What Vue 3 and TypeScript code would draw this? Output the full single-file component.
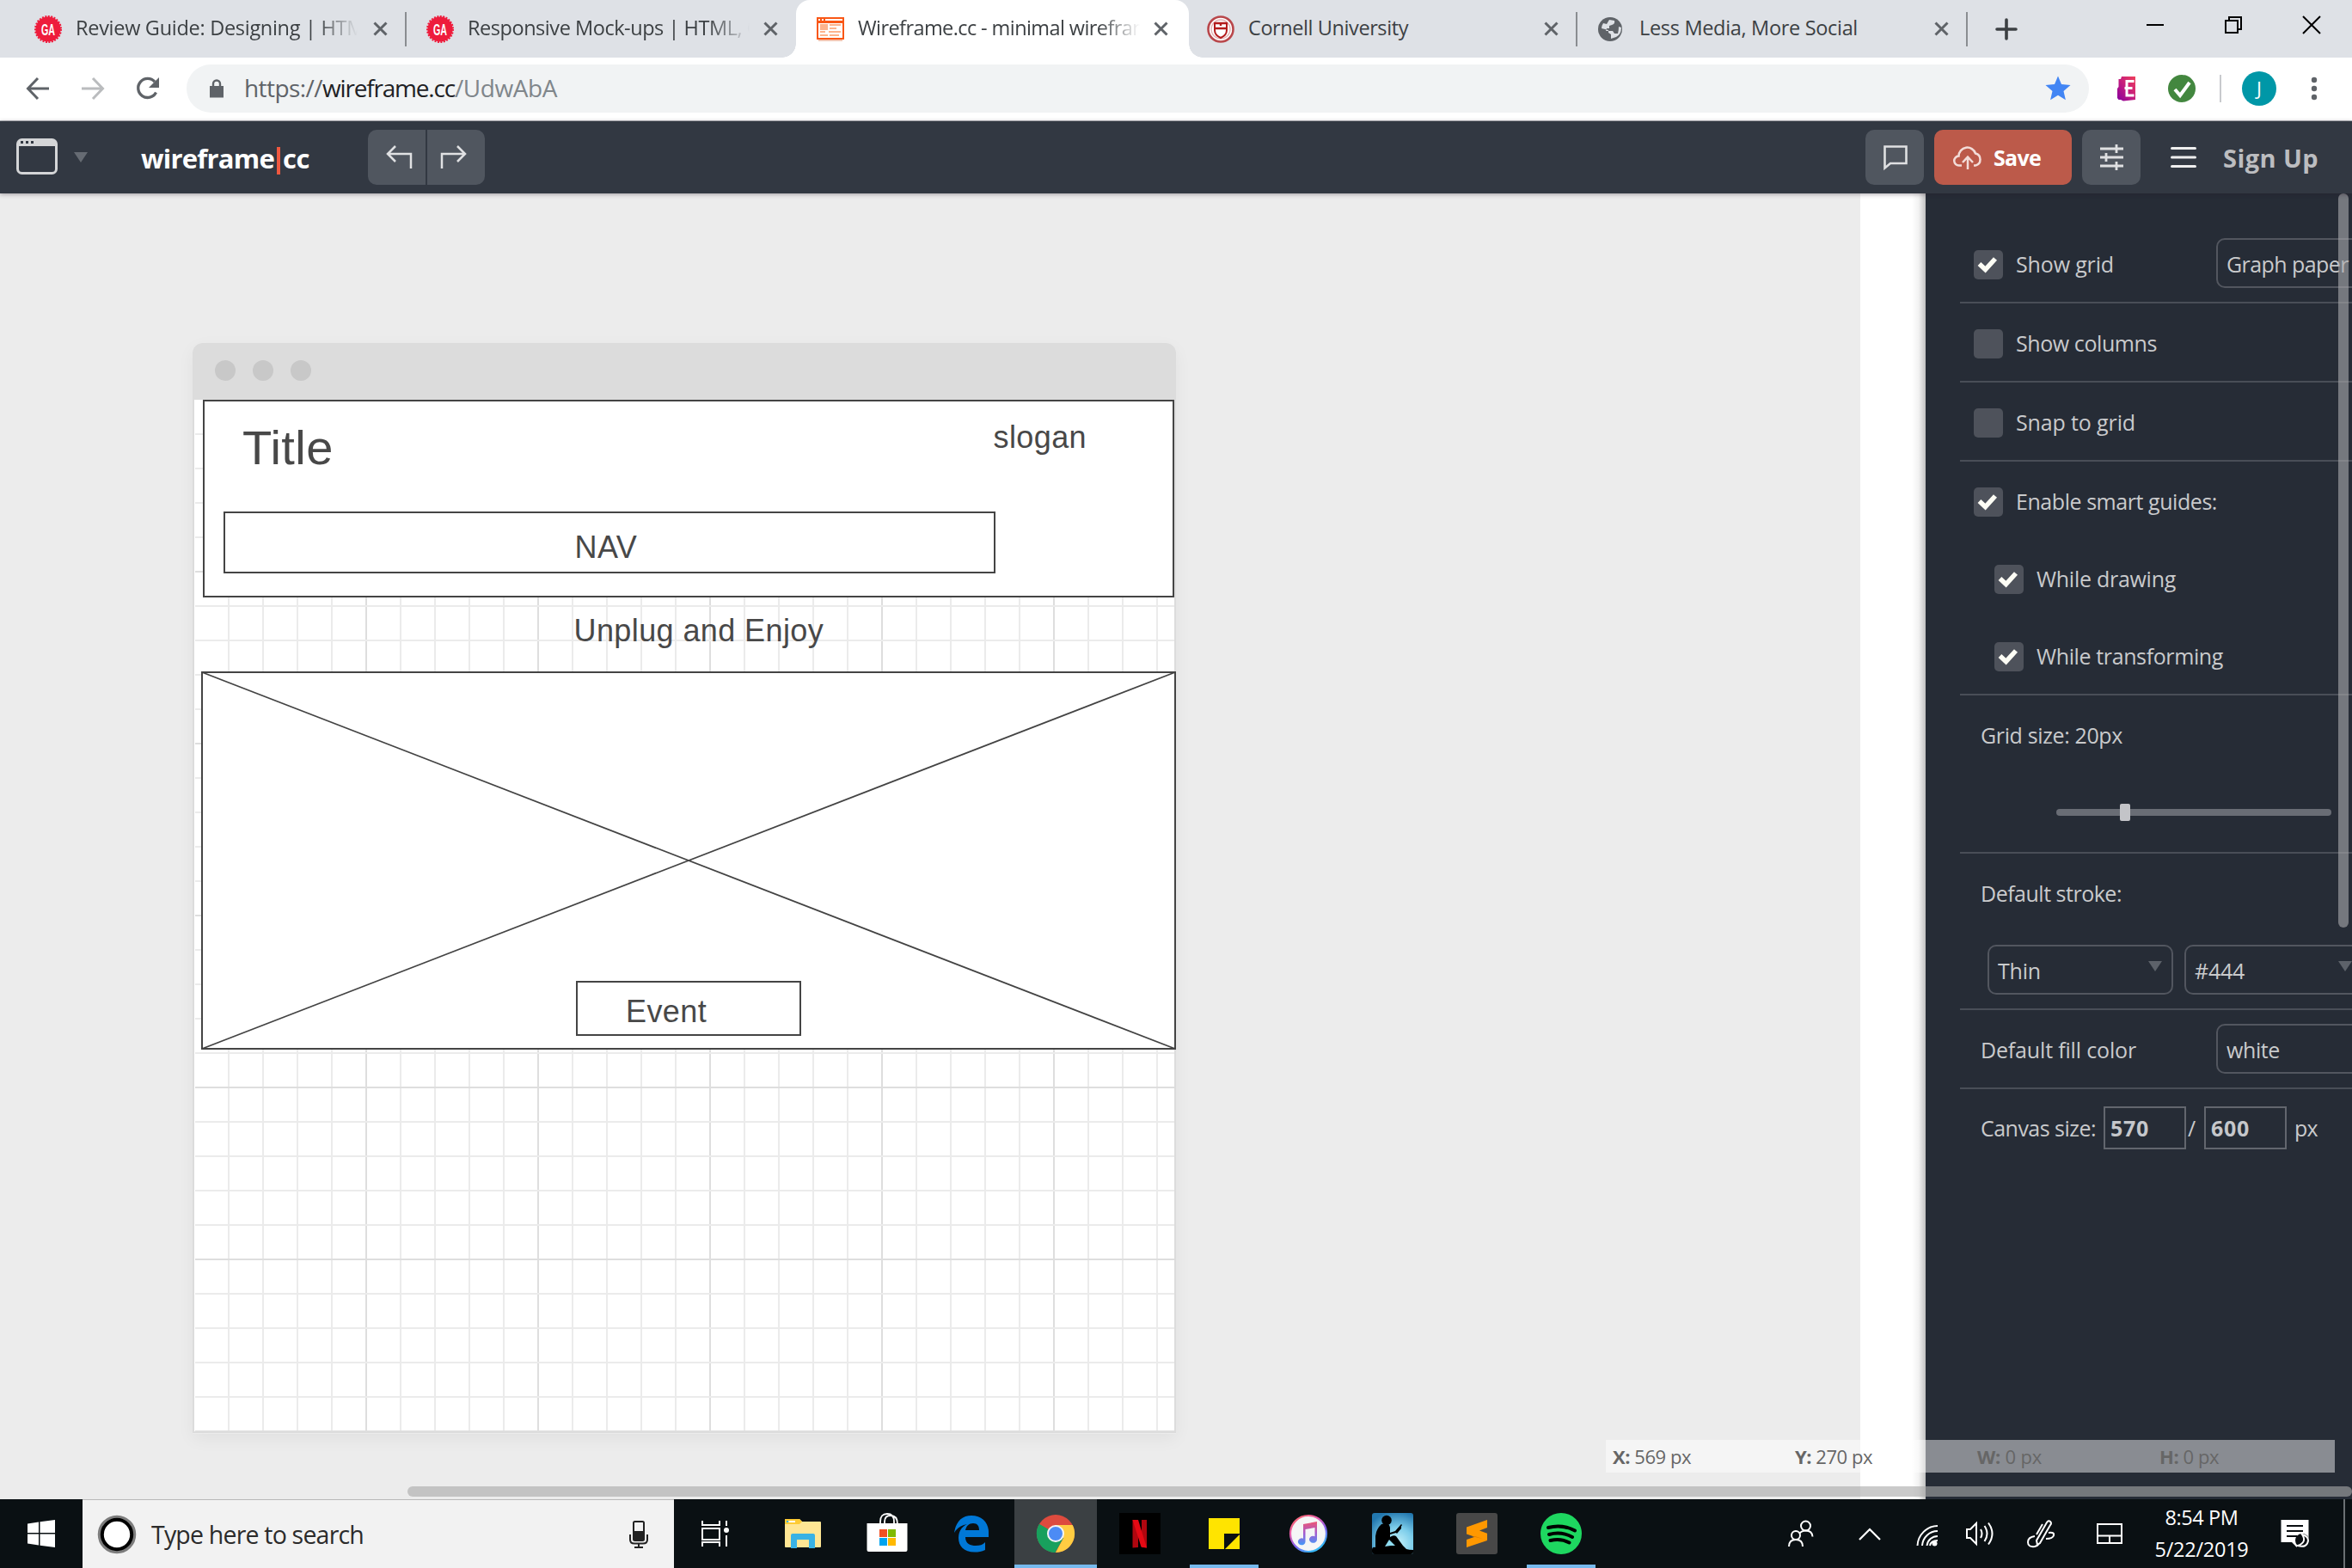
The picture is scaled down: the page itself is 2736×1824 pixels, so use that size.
<script setup lang="ts">
interface Tab {
  title: string
  icon: 'ga' | 'wire' | 'cornell' | 'globe'
  width: number
  active?: boolean
  divider?: boolean
  fade?: boolean
}

const tabs: Tab[] = [
  { title: 'Review Guide: Designing | HTML', icon: 'ga', width: 348, divider: true, fade: true },
  { title: 'Responsive Mock-ups | HTML, CSS', icon: 'ga', width: 364, fade: true },
  { title: 'Wireframe.cc - minimal wireframe', icon: 'wire', width: 353, active: true, fade: true },
  { title: 'Cornell University', icon: 'cornell', width: 186, divider: true },
  { title: 'Less Media, More Social', icon: 'globe', width: 254, divider: true },
]

const vLines = Array.from({ length: 28 }, (_, i) => i + 1)
const hLines = Array.from({ length: 30 }, (_, i) => i + 1)

const readout = [
  { k: 'X:', v: '569 px', w: 91 },
  { k: 'Y:', v: '270 px', w: 90 },
  { k: 'W:', v: '0 px', w: 75 },
  { k: 'H:', v: '0 px', w: 69 },
]

// Tunes letter spacing so that a label fills the given measure.
const vFit = {
  mounted(el: HTMLElement, binding: { value: number }) {
    const natural = el.getBoundingClientRect().width
    const count = (el.textContent ?? '').trim().length
    if (count > 1) el.style.letterSpacing = ((binding.value - natural) / count).toFixed(3) + 'px'
  },
}
</script>

<template>
  <div class="screen">
    <div class="tabstrip">
      <div v-for="(t, i) in tabs" :key="i" class="tab" :class="{ active: t.active, divider: t.divider }">
        <svg class="fav" width="32" height="32" viewBox="0 0 32 32">
          <template v-if="t.icon === 'ga'">
            <circle cx="16" cy="16" r="14.6" fill="#ee1c3c" />
            <circle cx="16" cy="16" r="15" fill="none" stroke="#ee1c3c" stroke-width="2" stroke-dasharray="2 1.5" />
            <text x="16" y="22.5" text-anchor="middle" class="ga" textLength="16" lengthAdjust="spacingAndGlyphs">GA</text>
          </template>
          <template v-else-if="t.icon === 'wire'">
            <path fill="#f95716" d="M0 2h32v26H0z" />
            <path fill="#fff" d="M2 4h2v2H2zM6 4h2v2H6zM10 4h20v2H10zM2 9h28v17H2z" />
            <path fill="#fdb48d" d="M4 10h9v7H4zM15 10h13v2H15zM15 14h8v2h-8zM4 18h6v2H4zM14 18h14v2H14zM4 22h9v2H4zM15 22h11v2H15z" />
            <path fill="#f4c6b2" d="M2 28h28v2H2z" />
          </template>
          <template v-else-if="t.icon === 'cornell'">
            <circle cx="16" cy="16" r="14.5" fill="#fff" stroke="#b9474b" stroke-width="2.6" />
            <circle cx="16" cy="16" r="11" fill="#fff" stroke="#e3b5b6" stroke-width="1.4" />
            <path d="M9 9h14v8q0 6-7 9q-7-3-7-9z" fill="#fff" stroke="#b31b1b" stroke-width="2" />
            <path d="M9 15h14M9 9h14M16 9v3" stroke="#b31b1b" stroke-width="2.4" />
          </template>
          <template v-else>
            <circle cx="14" cy="16" r="14" fill="#5f6368" />
            <path fill="#dee1e6" d="M13 5l6 1q1 4-3 5l-3 1v3h-3l-1 3h8l2 3h4q1-4 1-8l3 1q0 8-6 11l-6 2v-5l-3-2v-3L4 15q0-3 2-6l4 1z" />
          </template>
        </svg>
        <div class="tabtitle" :class="{ fade: t.fade }"><span v-fit="t.width">{{ t.title }}</span></div>
        <svg class="x" width="17" height="17" viewBox="0 0 17 17"><path d="M1.5 1.5l14 14M15.500 1.500l-14 14" stroke="#5f6368" stroke-width="3" /></svg>
      </div>
      <svg class="plus" width="24" height="24" viewBox="0 0 24 24"><path d="M12 1v22M1 12h22" stroke="#3c4043" stroke-width="3.6" stroke-linecap="round" /></svg>
      <div class="wincontrols">
        <svg width="20" height="20" viewBox="0 0 20 20"><path d="M0 10h20" stroke="#000" stroke-width="2" /></svg>
        <svg width="20" height="20" viewBox="0 0 20 20"><path d="M1 5h14v14H1zM5 5V1h14v14h-4" fill="none" stroke="#000" stroke-width="2" /></svg>
        <svg width="20" height="20" viewBox="0 0 20 20"><path d="M0 0l20 20M20 0L0 20" stroke="#000" stroke-width="2" /></svg>
      </div>
    </div>

    <div class="toolbar">
      <svg class="nav1" width="28" height="28" viewBox="0 0 28 28"><path d="M27 14H3M14 2L2.500 14L14 26" fill="none" stroke="#5f6368" stroke-width="3" /></svg>
      <svg class="nav2" width="28" height="28" viewBox="0 0 28 28"><path d="M1 14h24M14 2l11.500 12L14 26" fill="none" stroke="#babcbe" stroke-width="3" /></svg>
      <svg class="nav3" width="28" height="28" viewBox="0 0 28 28"><path d="M23.500 18.500A11 11 0 1 1 22 6.200" fill="none" stroke="#5f6368" stroke-width="3.300" /><path d="M27 1v12H15z" fill="#5f6368" /></svg>
      <div class="omnibox">
        <svg class="lock" width="18" height="22" viewBox="0 0 18 22"><path d="M1 8h16v13.500H1z" fill="#5f6368" /><path d="M5 9V5.500a4 4 0 0 1 8 0V9" fill="none" stroke="#5f6368" stroke-width="2.400" /></svg>
        <div class="url"><span v-fit="91" class="g1">https://</span><span v-fit="154">wireframe.cc</span><span v-fit="119" class="g2">/UdwAbA</span></div>
        <svg class="star" width="30" height="30" viewBox="0 0 30 30"><path fill="#4285f4" d="M15 0.500l4 9.600l10.500.9l-8 6.900l2.400 10.300L15 22.700l-8.900 5.500l2.400-10.300l-8-6.900l10.500-.9z" /></svg>
      </div>
      <svg class="ext1" width="24" height="30" viewBox="0 0 24 30">
        <defs><linearGradient id="eg" x1="1" y1="0" x2="0" y2="1"><stop offset="0" stop-color="#f0415a" /><stop offset=".5" stop-color="#c41c7e" /><stop offset="1" stop-color="#8500a0" /></linearGradient></defs>
        <path d="M6 1h16v27l-14 1.500L5 28H2.500L1 26V15l1.500-2V4H5z" fill="url(#eg)" />
        <path d="M20.500 6.500H12v16.500h8.500M9.500 14.500h9" fill="none" stroke="#fff" stroke-width="3" />
      </svg>
      <svg class="ext2" width="32" height="32" viewBox="0 0 32 32"><circle cx="16" cy="16" r="16" fill="#43873f" /><path d="M8 17l6 7L25 9" fill="none" stroke="#fff" stroke-width="4" /></svg>
      <i class="tsep"></i>
      <div class="avatar">J</div>
      <svg class="dots" width="8" height="28" viewBox="0 0 8 28"><circle cx="4" cy="4" r="3.200" /><circle cx="4" cy="14" r="3.200" /><circle cx="4" cy="24" r="3.200" /></svg>
    </div>

    <div class="apphead">
      <svg class="winicon" width="48" height="42" viewBox="0 0 48 42"><rect x="1.500" y="1.500" width="45" height="39" rx="5" fill="none" stroke="#d4d5d7" stroke-width="3" /><path d="M1 9V5q1-4 5-4h36q4 0 5 4v4z" fill="#d4d5d7" /><path d="M5 3h3v3H5zM11 3h3v3h-3zM17 3h3v3h-3z" fill="#323842" /></svg>
      <svg class="tri" width="16" height="12" viewBox="0 0 16 12"><path d="M0 0h16L8 12z" fill="#666b73" /></svg>
      <div class="logo"><span v-fit="155">wireframe</span><i></i><span v-fit="31">cc</span></div>
      <div class="history">
        <div class="hb undo"><svg width="30" height="28" viewBox="0 0 30 28"><path d="M29 27V10H2M11 1L2 10l9 9" fill="none" stroke="#e0e1e3" stroke-width="2.500" /></svg></div>
        <div class="hb redo"><svg width="30" height="28" viewBox="0 0 30 28"><path d="M1 27V10h27M19 1l9 9l-9 9" fill="none" stroke="#e0e1e3" stroke-width="2.500" /></svg></div>
      </div>
      <div class="btn comment"><svg width="28" height="28" viewBox="0 0 28 28"><path d="M1.500 1.500h25v19.500H8L1.500 26.500z" fill="none" stroke="#dfe0e2" stroke-width="2.600" /></svg></div>
      <div class="btn save">
        <svg width="32" height="27" viewBox="0 0 32 27"><path d="M9 22.500H6a5.500 5.500 0 0 1-.5-11A10 10 0 0 1 25 8.500a7.200 7.200 0 0 1 0 14h-2M16 27V13M10 19l6-6.500l6 6.500" fill="none" stroke="#f3dcd8" stroke-width="2.500" /></svg>
        <span v-fit="55">Save</span>
      </div>
      <div class="btn sliders"><svg width="28" height="30" viewBox="0 0 28 30"><path d="M1 5h27M1 15h27M1 25h27M20 0v10M8 10v10M20 20v10" fill="none" stroke="#dfe0e2" stroke-width="2.800" /></svg></div>
      <svg class="burger" width="30" height="26" viewBox="0 0 30 26"><path d="M1.500 2.500h27M1.500 13h27M1.500 23.500h27" stroke="#eee" stroke-width="3" stroke-linecap="round" /></svg>
      <div class="signup"><span v-fit="111">Sign Up</span></div>
    </div>

    <div class="work">
      <div class="stage">
        <div class="frame">
          <div class="framebar"><i></i><i></i><i></i></div>
          <svg class="sheet" width="1144" height="1203" viewBox="224 465 1144 1203">
            <path d="M224 465h1144v1202H224z" fill="#dcdcdc" />
            <path d="M226 465h1140v1200H226z" fill="#fff" />
            <g>
              <rect v-for="n in vLines" :key="'v' + n" :x="225 + n * 40" y="465" width="2" height="1200" :fill="n % 5 ? '#ebebeb' : '#dedede'" />
              <rect v-for="n in hLines" :key="'h' + n" x="227" :y="464 + n * 40" width="1139" height="2" :fill="n % 5 ? '#ebebeb' : '#dedede'" />
            </g>
            <g fill="#fff" stroke="#444" stroke-width="2">
              <rect x="237" y="466" width="1128" height="228" />
              <rect x="261" y="596" width="896" height="70" />
              <rect x="235" y="782" width="1132" height="438" />
              <path d="M235 782l1132 438M1367 782L235 1220" stroke-width="1.800" />
              <rect x="671" y="1142" width="260" height="62" />
            </g>
            <g class="mock">
              <text x="282" y="539.5" font-size="56">Title</text>
              <text x="1155.500" y="521" font-size="36">slogan</text>
              <text x="668.500" y="649" font-size="36">NAV</text>
              <text x="667.500" y="746" font-size="36">Unplug and Enjoy</text>
              <text x="728" y="1189" font-size="36">Event</text>
            </g>
          </svg>
        </div>
      </div>
      <div class="gutter"></div>
      <div class="panel">
        <div class="row first">
          <div class="check on"><svg viewBox="0 0 34 34"><path d="M6.500 16l7 6.500L25 10" /></svg></div>
          <span v-fit="114" class="lbl">Show grid</span>
          <div class="select wide"><span v-fit="142">Graph paper</span></div>
        </div>
        <div class="row">
          <div class="check"></div><span v-fit="164" class="lbl">Show columns</span>
        </div>
        <div class="row">
          <div class="check"></div><span v-fit="139" class="lbl">Snap to grid</span>
        </div>
        <div class="group">
          <div class="row bare">
            <div class="check on"><svg viewBox="0 0 34 34"><path d="M6.500 16l7 6.500L25 10" /></svg></div>
            <span v-fit="234" class="lbl">Enable smart guides:</span>
          </div>
          <div class="row bare sub">
            <div class="check on"><svg viewBox="0 0 34 34"><path d="M6.500 16l7 6.500L25 10" /></svg></div>
            <span v-fit="162" class="lbl">While drawing</span>
          </div>
          <div class="row bare sub">
            <div class="check on"><svg viewBox="0 0 34 34"><path d="M6.500 16l7 6.500L25 10" /></svg></div>
            <span v-fit="217" class="lbl">While transforming</span>
          </div>
        </div>
        <div class="group gridsize">
          <div class="caption"><span v-fit="165">Grid size: 20px</span></div>
          <div class="slider"><i></i></div>
        </div>
        <div class="group stroke">
          <div class="caption"><span v-fit="164">Default stroke:</span></div>
          <div class="selects">
            <div class="select"><span v-fit="50">Thin</span><b></b></div>
            <div class="select color"><span v-fit="58">#444</span><b></b></div>
          </div>
        </div>
        <div class="row fill">
          <span v-fit="181">Default fill color</span>
          <div class="select wide"><span v-fit="62">white</span></div>
        </div>
        <div class="row size">
          <span v-fit="134">Canvas size:</span>
          <div class="num"><span v-fit="45">570</span></div>
          <span class="slash">/</span>
          <div class="num"><span v-fit="45">600</span></div>
          <span v-fit="27" class="px">px</span>
        </div>
      </div>
      <div class="vscroll"></div>
      <div class="readout">
        <div v-for="r in readout" :key="r.k"><span v-fit="r.w"><b>{{ r.k }}</b> {{ r.v }}</span></div>
      </div>
      <div class="hscroll"></div>
    </div>

    <div class="taskbar">
      <div class="start"><svg width="32" height="32" viewBox="0 0 32 32"><path fill="#fff" d="M0 4.500L13 2.500V15H0zM14.500 2.300L32 0v15H14.500zM0 16.500h13V29.500L0 27.500zM14.500 16.500H32V32l-17.500-2.300z" /></svg></div>
      <div class="search">
        <svg width="46" height="46" viewBox="0 0 46 46"><circle cx="23" cy="23" r="20.500" fill="#fff" stroke="#7d7d7d" stroke-width="3.500" /><circle cx="23" cy="23" r="17.200" fill="#fff" stroke="#000" stroke-width="4" /></svg>
        <span v-fit="247">Type here to search</span>
        <svg class="mic" width="22" height="32" viewBox="0 0 22 32"><rect x="5" y="1" width="12" height="22" rx="1.500" fill="none" stroke="#222" stroke-width="2" /><path d="M5 12h12v11H5z" fill="#222" /><path d="M1 16v6q0 4.500 5 4.500h10q5 0 5-4.500v-6M11 27v4M6 31h10" fill="none" stroke="#222" stroke-width="2" /></svg>
      </div>
      <div class="apps">
        <div class="app taskview">
          <svg width="48" height="48" viewBox="0 0 48 48"><path d="M9 9v5h20V9M9 18h20v13H9zM9 39v-5h20v5M37 9v6M37 26v13" fill="none" stroke="#fff" stroke-width="2" /><circle cx="37" cy="20" r="3" fill="#fff" /></svg>
        </div>
        <div class="app">
          <svg width="48" height="48" viewBox="0 0 48 48"><path d="M3 8q0-1 1-1h16l3 3h21q1 0 1 1v28q0 1-1 1H4q-1 0-1-1z" fill="#ffe694" /><path d="M3 8q0-1 1-1h16l3 3l-3 3H3z" fill="#fdcb35" /><path d="M5 9h2v2H5z" fill="#3bb4e5" /><path d="M7.500 9H15v2H7.500z" fill="#fff" /><path d="M10 41V26q0-2 2-2h24q2 0 2 2v15h-7V31H17v10z" fill="#39b2e5" /></svg>
        </div>
        <div class="app">
          <svg width="48" height="48" viewBox="0 0 48 48"><path d="M16 13v-3q0-9 8-9t8 9v3M21 13v-3q0-7 7-7q8 0 8 10" fill="none" stroke="#fff" stroke-width="1.800" /><path d="M0.500 12h47v31q0 2-2 2h-43q-2 0-2-2z" fill="#fff" /><path d="M15 19h9v9h-9z" fill="#f25022" /><path d="M25 19h9v9h-9z" fill="#7fba00" /><path d="M15 29h9v9h-9z" fill="#00a4ef" /><path d="M25 29h9v9h-9z" fill="#ffb900" /></svg>
        </div>
        <div class="app">
          <svg width="48" height="48" viewBox="0 0 48 48"><path fill="#0078d7" d="M4 23C6 10 13 3 24 3c12 0 20 8 20 19v6H17c0 8 6 10 12 10c5 0 8-1 11-4v9c-4 2-8 2.500-12 2.500C15 45.500 9 38 9 29c0-8 4-13 10-16C12 14 7 18 4 23zM17 20h16c0-5-2-8-7-8s-8 3-9 8z" /></svg>
        </div>
        <div class="app current run">
          <svg width="48" height="48" viewBox="0 0 48 48">
            <circle cx="24" cy="24" r="22" fill="#dd4b3e" />
            <path d="M24 24L5 12.900A22 22 0 0 0 24 46z" fill="#18a05d" />
            <path d="M24 14h19.700A22 22 0 0 1 24 46l9-17z" fill="#ffcd42" />
            <path d="M24 24L5 12.900A22 22 0 0 0 23.500 46l9.500-17z" fill="#18a05d" />
            <circle cx="24" cy="24" r="10" fill="#f4f4f4" /><circle cx="24" cy="24" r="8" fill="#4c8bf5" />
          </svg>
        </div>
        <div class="app">
          <svg width="48" height="48" viewBox="0 0 48 48"><path d="M0 0h48v48H0z" /><path d="M15.500 8h6.500v32l-6.500.5zM26 8h6v32.500l-6-.5z" fill="#b1060f" /><path d="M15.500 8H22l10 32.500l-6.500-1z" fill="#e50914" /></svg>
        </div>
        <div class="app run">
          <svg width="48" height="48" viewBox="0 0 48 48"><path d="M6 6h36v36H6z" fill="#ffe400" /><path d="M24 24h18v18H24z" fill="#0a0f12" /><path d="M42 25v17H25z" fill="#ffe400" /></svg>
        </div>
        <div class="app">
          <svg width="48" height="48" viewBox="0 0 48 48">
            <defs>
              <linearGradient id="ir" x1="0" y1="0" x2=".6" y2="1"><stop offset="0" stop-color="#fd6a5e" /><stop offset=".4" stop-color="#e65db0" /><stop offset=".7" stop-color="#7b61f2" /><stop offset="1" stop-color="#35b8f6" /></linearGradient>
              <linearGradient id="in" x1=".5" y1="0" x2=".5" y2="1"><stop offset="0" stop-color="#ee5573" /><stop offset=".5" stop-color="#a35bd0" /><stop offset="1" stop-color="#4398f9" /></linearGradient>
            </defs>
            <circle cx="24" cy="24" r="21" fill="#f5f5f6" stroke="url(#ir)" stroke-width="2.200" />
            <path d="M18 13l16-3v21a4.500 4 0 1 1-2.500-3.800V17L20.500 19v14.500a4.300 4 0 1 1-2.500-3.800z" fill="url(#in)" />
          </svg>
        </div>
        <div class="app">
          <svg width="48" height="48" viewBox="0 0 48 48">
            <defs><radialGradient id="kg" cx=".6" cy=".75" r=".8"><stop offset="0" stop-color="#c9f4fb" /><stop offset=".5" stop-color="#7ccdea" /><stop offset="1" stop-color="#2277ae" /></radialGradient></defs>
            <rect width="48" height="48" rx="3" fill="url(#kg)" />
            <circle cx="17" cy="8.500" r="5.800" />
            <path d="M11 13q-6 5-7 14v13Q0 39 0 43v2q0 3 3 3h42q3 0 3-3v-2q-5 0-8-1l-4-4L28 27q-3-2-7 1v-3l7-2l5-6l2-3l-1-1l-7 8l-6 2v-6q-1-5-5-5z" />
            <path d="M27 22l3-4l4-3v3l-5 6z" />
            <path d="M20 31l7 7h-5l-7 1z" fill="#8fdcf0" />
          </svg>
        </div>
        <div class="app">
          <svg width="48" height="48" viewBox="0 0 48 48"><rect width="48" height="48" rx="3" fill="#484848" /><path d="M12 16.500L36 8v9L27 20.500l9 3.200V32l-24 8v-9l9.500-3.300L12 24.500z" fill="#ff9800" /><path d="M18 27l18 4.500V32L22 27z" fill="#e57f00" /></svg>
        </div>
        <div class="app run">
          <svg width="48" height="48" viewBox="0 0 48 48"><circle cx="24" cy="24" r="24" fill="#1ed760" /><path d="M9 17q16-4.500 31 3.500M10 25q14-4 27 3M11.500 32q12-3 22 2.500" fill="none" stroke="#000" stroke-width="4" stroke-linecap="round" /></svg>
        </div>
      </div>
      <div class="tray">
        <svg class="t1" width="30" height="32" viewBox="0 0 30 32"><g fill="none" stroke="#fff" stroke-width="2"><circle cx="20.500" cy="7" r="5.500" /><path d="M13 16q3-3.500 7.500-3.500q7.500 0 8 7" /><circle cx="9" cy="18" r="5" /><path d="M1 31q0-8 8-8t8 8" /></g></svg>
        <svg class="t2" width="26" height="15" viewBox="0 0 26 15"><path d="M1 14L13 2l12 12" fill="none" stroke="#fff" stroke-width="2.200" /></svg>
        <svg class="t3" width="26" height="26" viewBox="0 0 26 26"><g fill="none" stroke="#fff" stroke-width="2"><path d="M1.500 25A24 24 0 0 1 25 2M7 25A18 18 0 0 1 25 8M12.500 25A12.500 12.500 0 0 1 25 14" /><path d="M16 25q1-6 9-6" /></g><circle cx="21.500" cy="22.500" r="3" fill="#fff" /></svg>
        <svg class="t4" width="34" height="28" viewBox="0 0 34 28"><g fill="none" stroke="#fff" stroke-width="2"><path d="M1 9h4l7-7v24l-7-7H1zM17 9q3 5 0 10M21.500 5q6 9 0 18M26 1.500q9 12.500 0 25" /></g></svg>
        <svg class="t5" width="34" height="32" viewBox="0 0 34 32"><g fill="none" stroke="#fff" stroke-width="2"><path d="M12 29L11 24L23 3q2-3 4-1t0 4L15 27z" /><path d="M18 5l-7 12M9 19q-8 1-8 7t8 5q4-1 4-3M25 15q7-1 6 3t-9 4" /></g></svg>
        <svg class="t6" width="30" height="24" viewBox="0 0 30 24"><path d="M1 1h28v22H1zM1 14.500h28M15 14.500V23" fill="none" stroke="#fff" stroke-width="2" /></svg>
        <div class="clock"><span v-fit="85">8:54 PM</span><span v-fit="109">5/22/2019</span></div>
        <svg class="t7" width="34" height="33" viewBox="0 0 34 33"><path d="M0.500 0h32v26H19v6l-6-6H0.500z" fill="#fff" /><path d="M7 7h19M7 13h19M7 19h12" stroke="#0a0e11" stroke-width="2.200" /><circle cx="25" cy="24" r="8" fill="#0a0e11" /><path d="M25 17q6 9-5 13q11 3 12-6q0-5-7-7z" fill="#0a0e11" stroke="#fff" stroke-width="2" /></svg>
        <i class="desk"></i>
      </div>
    </div>
  </div>
</template>

<style>
body { overflow: hidden; background: #ececec; }
</style>

<style scoped>
.screen { width: 2736px; height: 1824px; overflow: hidden; display: flex; flex-direction: column; font-family: "Open Sans", "Noto Sans", sans-serif; white-space: nowrap; }
.screen * { box-sizing: border-box; }
svg { display: block; flex: none; overflow: visible; }

.tabstrip { height: 67px; background: #dee1e6; display: flex; align-items: center; padding-left: 18px; flex: none; }
.tab { width: 454px; height: 67px; display: flex; align-items: center; padding-left: 24px; position: relative; flex: none; }
.tab:first-child { padding-left: 22px; }
.tab:nth-child(5) { padding-left: 25px; }
.tab.divider::after { content: ""; position: absolute; right: -1px; top: 14px; width: 2px; height: 40px; background: #8a8d91; }
.tab.active { background: #fff; border-radius: 16px 16px 0 0; width: 457px; margin-right: -3px; }
.tab.active::before, .tab.active::after { content: ""; position: absolute; bottom: 0; width: 16px; height: 16px; }
.tab.active::before { left: -16px; background: radial-gradient(circle at 0 0, transparent 15.500px, #fff 16px); }
.tab.active::after { right: -16px; background: radial-gradient(circle at 100% 0, transparent 15.500px, #fff 16px); }
.ga { font: bold 19px "Liberation Sans Narrow", "Liberation Sans", sans-serif; fill: #fff; }
.tabtitle { margin-left: 16px; width: 328px; overflow: hidden; font-size: 23.500px; line-height: 40px; color: #3c4043; position: relative; top: -2px; }
.tabtitle.fade { -webkit-mask-image: linear-gradient(90deg, #000 280px, transparent 328px); mask-image: linear-gradient(90deg, #000 280px, transparent 328px); }
.x { margin-left: auto; margin-right: 21px; }
.active .x { margin-right: 24px; }
.plus { margin-left: 34px; }
.wincontrols { display: flex; gap: 71px; margin-left: auto; padding-right: 37px; margin-top: -10px; }

.toolbar { height: 74px; background: #fff; border-bottom: 1px solid #b5b8bc; display: flex; align-items: center; flex: none; padding-bottom: 1px; }
.nav1 { margin-left: 30px; }
.nav2 { margin-left: 36px; }
.nav3 { margin-left: 36px; }
.omnibox { margin-left: 31px; width: 2213px; height: 56px; border-radius: 28px; background: #f1f3f4; display: flex; align-items: center; padding-left: 26px; flex: none; }
.url { margin-left: 23px; font-size: 28px; line-height: 50px; color: #202124; display: flex; margin-top: -2px; }
.url .g1 { color: #5f6368; }
.url .g2 { color: #80868b; }
.star { margin-left: auto; margin-right: 21px; }
.ext1 { margin-left: 32px; }
.ext2 { margin-left: 36px; }
.tsep { width: 2px; height: 32px; background: #c8cacd; margin-left: 28px; }
.avatar { margin-left: 24px; width: 40px; height: 40px; border-radius: 50%; background: #0097a7; color: #fff; font-size: 22px; line-height: 38px; text-align: center; }
.dots { margin-left: 40px; fill: #5f6368; }

.apphead { height: 84px; background: #323842; display: flex; align-items: center; position: relative; z-index: 3; box-shadow: 0 1px 5px rgba(40, 25, 40, .38); flex: none; }
.winicon { margin-left: 19px; margin-top: -2px; }
.tri { margin-left: 19px; }
.logo { margin-left: 62px; display: flex; align-items: center; color: #fff; font-weight: 700; font-size: 31px; line-height: 60px; height: 60px; }
.logo span { position: relative; top: 1px; }
.logo i { width: 4px; height: 32px; background: #f0583f; margin: 8px 3px 0; }
.history { display: flex; gap: 2px; margin-left: 68px; }
.hb { width: 67px; height: 64px; background: #50565f; border-radius: 10px 0 0 10px; display: flex; align-items: center; justify-content: center; }
.hb + .hb { border-radius: 0 10px 10px 0; }
.undo { padding-left: 4px; }
.redo { padding-right: 5px; }
.btn { height: 64px; border-radius: 10px; background: #50565f; display: flex; align-items: center; justify-content: center; }
.comment { width: 68px; margin-left: auto; padding-left: 2px; }
.save { width: 160px; margin-left: 12px; background: #bc5a4a; color: #fff; font-weight: 700; font-size: 25px; gap: 14px; justify-content: flex-start; padding-left: 23px; }
.sliders { width: 68px; margin-left: 12px; }
.burger { margin-left: 35px; }
.signup { width: 150px; margin-left: 31px; font-weight: 700; font-size: 29px; color: #bcbdc0; }

.work { height: 1519px; display: flex; position: relative; flex: none; overflow: hidden; }
.stage { width: 2164px; background: #ececec; padding: 174px 0 0 224px; }
.gutter { width: 76px; background: linear-gradient(90deg, #fff 60px, #f2f2f2 68px, #c0c0c0 76px); }
.frame { width: 1144px; border-radius: 12px 12px 0 0; box-shadow: 0 6px 20px rgba(0, 0, 0, .05); }
.framebar { height: 66px; background: #dcdcdc; border-radius: 12px 12px 0 0; display: flex; gap: 20px; padding: 20px 0 0 26px; }
.framebar i { width: 24px; height: 24px; border-radius: 50%; background: #c8c8c8; }
.mock { font-family: "Liberation Sans", Arial, sans-serif; fill: #484848; letter-spacing: .4px; }

.panel { width: 496px; background: #262c36; color: #c9cacc; font-size: 25px; line-height: 40px; padding-left: 40px; padding-top: 36px; overflow: hidden; }
.row { height: 92px; border-bottom: 2px solid #494e57; display: flex; align-items: center; padding-left: 16px; flex: none; }
.bare { border: 0; }
.check { width: 34px; height: 34px; border-radius: 5px; background: #4e525b; margin-top: 4px; flex: none; }
.check path { fill: none; stroke: #fdfdf5; stroke-width: 5.500; }
.lbl { margin-left: 15px; padding-top: 1px; }
.select { width: 216px; height: 58px; border: 2px solid #52565f; border-radius: 10px; display: flex; align-items: center; justify-content: space-between; padding: 2px 11px 0 10px; color: #c9cacc; flex: none; }
.select b { width: 0; height: 0; border: 8px solid transparent; border-top: 12px solid #5d626a; border-bottom: 0; margin-top: -11px; }
.select.color { padding-right: 19px; }
.first .wide { margin-left: 119px; }
.group { border-bottom: 2px solid #494e57; }
.group .row { height: 90px; padding-left: 16px; }
.group .sub { padding-left: 40px; }
.group:not(.gridsize):not(.stroke) { height: 272px; }
.gridsize { height: 184px; padding: 26px 0 0 24px; }
.slider { margin: 66px 0 0 88px; width: 320px; height: 8px; border-radius: 4px; background: #696d75; }
.slider i { display: block; width: 12px; height: 20px; border-radius: 2px; background: #c3c4c8; position: relative; left: 74px; top: -6px; }
.stroke { height: 182px; padding: 26px 0 0 24px; }
.selects { display: flex; gap: 13px; margin: 40px 0 0 8px; }
.fill { padding-left: 24px; }
.fill > span { padding-top: 1px; }
.fill .wide { margin-left: auto; margin-right: -58px; }
.size { padding-left: 24px; border: 0; height: 90px; }
.size > span { padding-top: 0; }
.num { width: 96px; height: 50px; border: 2px solid #62666e; font-weight: 700; padding: 3px 0 0 6px; margin-left: 9px; margin-right: 2px; color: #c5c7cb; flex: none; }
.slash { width: 10px; }
.px { margin-left: 7px; }

.vscroll { position: absolute; left: 2720px; top: 0; width: 12px; height: 854px; border-radius: 6px; background: rgba(169, 169, 172, .61); }
.hscroll { position: absolute; left: 474px; top: 1504px; width: 2262px; height: 12px; border-radius: 6px; background: rgba(169, 169, 169, .61); }
.readout { position: absolute; left: 1868px; top: 1450px; width: 848px; height: 38px; background: rgba(255, 255, 255, .46); display: flex; font-size: 22px; line-height: 38px; color: #666; }
.readout div { width: 212px; padding-left: 8px; }

.taskbar { height: 80px; background: #0a1013; display: flex; position: relative; flex: none; }
.start { width: 96px; display: flex; align-items: center; justify-content: center; }
.search { width: 688px; background: #f2f2f2; border-top: 1px solid #b9b9b9; display: flex; align-items: center; padding-left: 17px; font-size: 28.500px; color: #2b2b2b; }
.search span { margin-left: 17px; }
.mic { margin-left: auto; margin-right: 30px; }
.apps { display: flex; gap: 2px; }
.app { width: 96px; height: 80px; display: flex; align-items: center; justify-content: center; position: relative; flex: none; }
.taskview { margin-right: 4px; }
.current { background: #3b4043; }
.run::after { content: ""; position: absolute; left: 8px; right: 8px; bottom: 0; height: 4px; background: #76b9ed; }
.current::after { left: 0; right: 0; }
.tray { display: flex; align-items: center; flex: 1; margin-left: 216px; }
.t2 { margin-left: 52px; }
.t3 { margin-left: 41px; margin-top: 4px; }
.t4 { margin-left: 32px; }
.t5 { margin-left: 37px; }
.t6 { margin-left: 47px; }
.clock { width: 120px; margin-left: 32px; color: #fff; font-size: 23.500px; line-height: 37px; display: flex; flex-direction: column; align-items: center; padding-bottom: 1px; }
.t7 { margin-left: 32px; }
.desk { width: 2px; height: 80px; background: #6b7073; margin-left: 39px; }
</style>
